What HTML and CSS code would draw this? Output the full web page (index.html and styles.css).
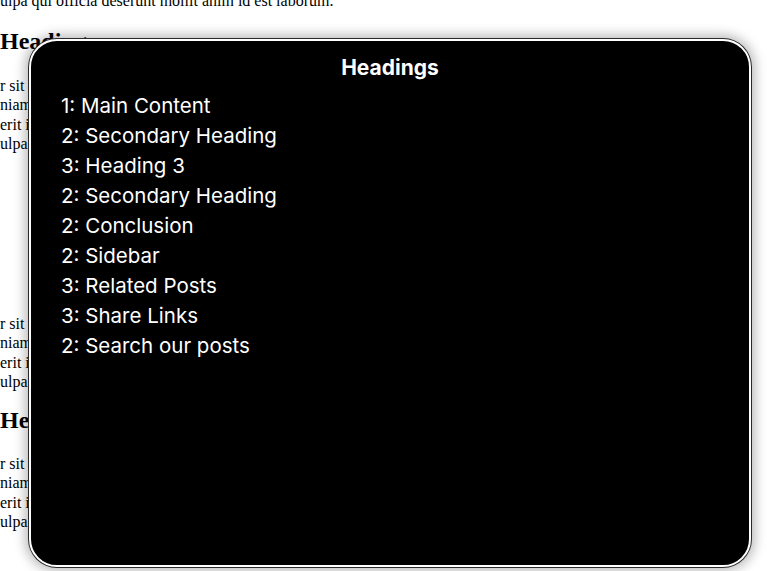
FILE: index.html
```html
<!DOCTYPE html>
<html lang="en">
<head>
<meta charset="utf-8">
<title>Headings</title>
<link rel="stylesheet" href="styles.css">
</head>
<body>
<main class="page">
  <p class="line">ulpa qui officia deserunt mollit anim id est laborum.</p>
  <h2 class="heading heading-first">Heading</h2>
  <div class="para">
    <p class="line">r sit amet, consectetur adipiscing elit, sed do eiusmod tempor incididunt ut labore et dolore magna aliqua. Ut enim ad mi</p>
    <p class="line">niam, quis nostrud exercitation ullamco laboris nisi ut aliquip ex ea commodo consequat. Duis aute irure dolor in reprehend</p>
    <p class="line">erit in voluptate velit esse cillum dolore eu fugiat nulla pariatur. Excepteur sint occaecat cupidatat non proident, sunt in c</p>
    <p class="line">ulpa qui officia deserunt mollit anim id est laborum.</p>
  </div>
  <div class="para para-spaced">
    <p class="line">r sit amet, consectetur adipiscing elit, sed do eiusmod tempor incididunt ut labore et dolore magna aliqua. Ut enim ad mi</p>
    <p class="line">niam, quis nostrud exercitation ullamco laboris nisi ut aliquip ex ea commodo consequat. Duis aute irure dolor in reprehend</p>
    <p class="line">erit in voluptate velit esse cillum dolore eu fugiat nulla pariatur. Excepteur sint occaecat cupidatat non proident, sunt in c</p>
    <p class="line">ulpa qui officia deserunt mollit anim id est laborum.</p>
  </div>
  <h2 class="heading heading-lower">Heading</h2>
  <div class="para">
    <p class="line">r sit amet, consectetur adipiscing elit, sed do eiusmod tempor incididunt ut labore et dolore magna aliqua. Ut enim ad mi</p>
    <p class="line">niam, quis nostrud exercitation ullamco laboris nisi ut aliquip ex ea commodo consequat. Duis aute irure dolor in reprehend</p>
    <p class="line">erit in voluptate velit esse cillum dolore eu fugiat nulla pariatur. Excepteur sint occaecat cupidatat non proident, sunt in c</p>
    <p class="line">ulpa qui officia deserunt mollit anim id est laborum.</p>
  </div>
</main>

<section class="rotor" aria-label="Headings">
  <h1 class="rotor-title">Headings</h1>
  <ul class="rotor-list">
    <li>1: Main Content</li>
    <li>2: Secondary Heading</li>
    <li>3: Heading 3</li>
    <li>2: Secondary Heading</li>
    <li>2: Conclusion</li>
    <li>2: Sidebar</li>
    <li>3: Related Posts</li>
    <li>3: Share Links</li>
    <li>2: Search our posts</li>
  </ul>
</section>
</body>
</html>
```

FILE: styles.css
```css
html, body {
  margin: 0;
  padding: 0;
  background: #fff;
  overflow: hidden;
}

body {
  width: 767px;
  height: 571px;
  font-family: "Liberation Serif", "Times New Roman", serif;
  color: #000;
}

.page {
  width: 720px;
  overflow: hidden;
  margin-top: -9.2px;
}

.line {
  margin: 0;
  font-size: 16px;
  line-height: 19.5px;
  white-space: nowrap;
  overflow: hidden;
}

.heading {
  margin: 0;
  font-size: 24px;
  line-height: 28px;
  font-weight: bold;
  white-space: nowrap;
}

.heading-first {
  margin: 17px 0 20.5px;
}

.heading-lower {
  margin: 14.5px 0 19.5px;
}

.para-spaced {
  margin-top: 160px;
}

.rotor {
  position: absolute;
  left: 29px;
  top: 39px;
  width: 722px;
  height: 528px;
  box-sizing: border-box;
  background: #000;
  border: 2px solid #fff;
  border-radius: 28px;
  box-shadow: 0 0 0 1px #2a2a2a, 0 0 12px 4px rgba(0, 0, 0, 0.28);
  padding: 15px 30px 0;
  color: #fff;
  font-family: Inter, "Noto Sans", sans-serif;
}

.rotor-title {
  margin: 0;
  text-align: center;
  font-size: 21px;
  line-height: 24px;
  font-weight: 700;
}

.rotor-list {
  list-style: none;
  margin: 11px 0 0;
  padding: 0;
}

.rotor-list li {
  font-size: 20.5px;
  line-height: 30px;
  white-space: nowrap;
}
```
